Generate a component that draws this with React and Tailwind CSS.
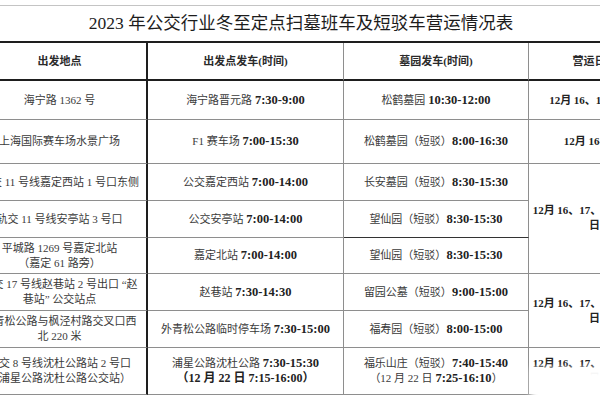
import React from 'react';

const serif = { fontFamily: '"Liberation Serif", "Noto Sans CJK SC", serif' };

function Cell({ children, className = '' }) {
  return (
    <div className={`flex flex-col items-center justify-center text-center whitespace-nowrap border-b border-r border-[#8e8e8e] leading-[15px] ${className}`}>
      {children}
    </div>
  );
}

const T = ({ children }) => <b className="text-[12.5px] font-bold text-[#222]">{children}</b>;

export default function App() {
  const first = 'border-r-2 border-r-[#1e1e1e]';
  const days = (
    <>
      <span>12月 16、17、18、22、23</span>
      <span>日</span>
    </>
  );

  return (
    <div className="relative w-[600px] h-[400px] overflow-hidden bg-white pt-[5px] text-[11px] text-[#3a3a3a]" style={serif}>
      {/* title */}
      <div className="h-[38px] flex items-center justify-center border-t border-[#c4c4c4] border-b-2 border-b-[#1e1e1e] text-[17.5px] text-[#1c1c1c] pl-[2px]">
        2023 年公交行业冬至定点扫墓班车及短驳车营运情况表
      </div>

      <div className="ml-[-27px] grid grid-cols-[175px_196px_185px_132px] grid-rows-[38px_39px_44px_37px_37px_36px_37px_37px_47px]">
        {/* header */}
        <Cell className={`${first} border-b-2 border-b-[#1e1e1e] font-bold text-[#2a2a2a]`}>出发地点</Cell>
        <Cell className="border-b-2 border-b-[#1e1e1e] font-bold text-[#2a2a2a]">出发点发车(时间)</Cell>
        <Cell className="border-b-2 border-b-[#1e1e1e] font-bold text-[#2a2a2a]">墓园发车(时间)</Cell>
        <Cell className="border-b-2 border-b-[#1e1e1e] font-bold text-[#2a2a2a]">营运日期</Cell>

        {/* row 1 */}
        <Cell className={first}>海宁路 1362 号</Cell>
        <Cell><span>海宁路晋元路 <T>7:30-9:00</T></span></Cell>
        <Cell><span>松鹤墓园 <T>10:30-12:00</T></span></Cell>
        <Cell className="font-bold text-[#222]">12月 16、17、22日</Cell>

        {/* row 2 */}
        <Cell className={first}>上海国际赛车场水景广场</Cell>
        <Cell><span>F1 赛车场 <T>7:00-15:30</T></span></Cell>
        <Cell><span>松鹤墓园（短驳）<T>8:00-16:30</T></span></Cell>
        <Cell className="font-bold text-[#222]">12月 16-22日</Cell>

        {/* row 3 */}
        <Cell className={first}>轨交 11 号线嘉定西站 1 号口东侧</Cell>
        <Cell><span>公交嘉定西站 <T>7:00-14:00</T></span></Cell>
        <Cell><span>长安墓园（短驳）<T>8:30-15:30</T></span></Cell>
        <Cell className="row-span-3 font-bold text-[#222] pb-[1px]">{days}</Cell>

        {/* row 4 */}
        <Cell className={first}>轨交 11 号线安亭站 3 号口</Cell>
        <Cell><span>公交安亭站 <T>7:00-14:00</T></span></Cell>
        <Cell className="border-b-[#333]"><span>望仙园（短驳）<T>8:30-15:30</T></span></Cell>

        {/* row 5 */}
        <Cell className={first}>
          <span>平城路 1269 号嘉定北站</span>
          <span>（嘉定 61 路旁）</span>
        </Cell>
        <Cell><span>嘉定北站 <T>7:00-14:00</T></span></Cell>
        <Cell><span>望仙园（短驳）<T>8:30-15:30</T></span></Cell>

        {/* row 6 */}
        <Cell className={first}>
          <span>轨交 17 号线赵巷站 2 号出口 “赵</span>
          <span>巷站” 公交站点</span>
        </Cell>
        <Cell><span>赵巷站 <T>7:30-14:30</T></span></Cell>
        <Cell><span>留园公墓（短驳）<T>9:00-15:00</T></span></Cell>
        <Cell className="row-span-2 font-bold text-[#222]">{days}</Cell>

        {/* row 7 */}
        <Cell className={first}>
          <span>外青松公路与枫泾村路交叉口西</span>
          <span>北 220 米</span>
        </Cell>
        <Cell><span>外青松公路临时停车场 <T>7:30-15:00</T></span></Cell>
        <Cell><span>福寿园（短驳）<T>8:00-15:00</T></span></Cell>

        {/* row 8 */}
        <Cell className={first}>
          <span>轨交 8 号线沈杜公路站 2 号口</span>
          <span>（浦星公路沈杜公路公交站）</span>
        </Cell>
        <Cell>
          <span>浦星公路沈杜公路 <T>7:30-15:30</T></span>
          <b className="text-[12px] text-[#222]">（12 月 22 日 7:15-16:00）</b>
        </Cell>
        <Cell>
          <span>福乐山庄（短驳）<T>7:40-15:40</T></span>
          <span>（12 月 22 日 <T>7:25-16:10</T>）</span>
        </Cell>
        <Cell className="font-bold text-[#222]">{days}</Cell>
      </div>

      {/* white smudge covering the bottom right corner */}
      <div className="absolute left-[531px] top-[368px] right-[-10px] bottom-[-10px] bg-white blur-[3px]" />
    </div>
  );
}
